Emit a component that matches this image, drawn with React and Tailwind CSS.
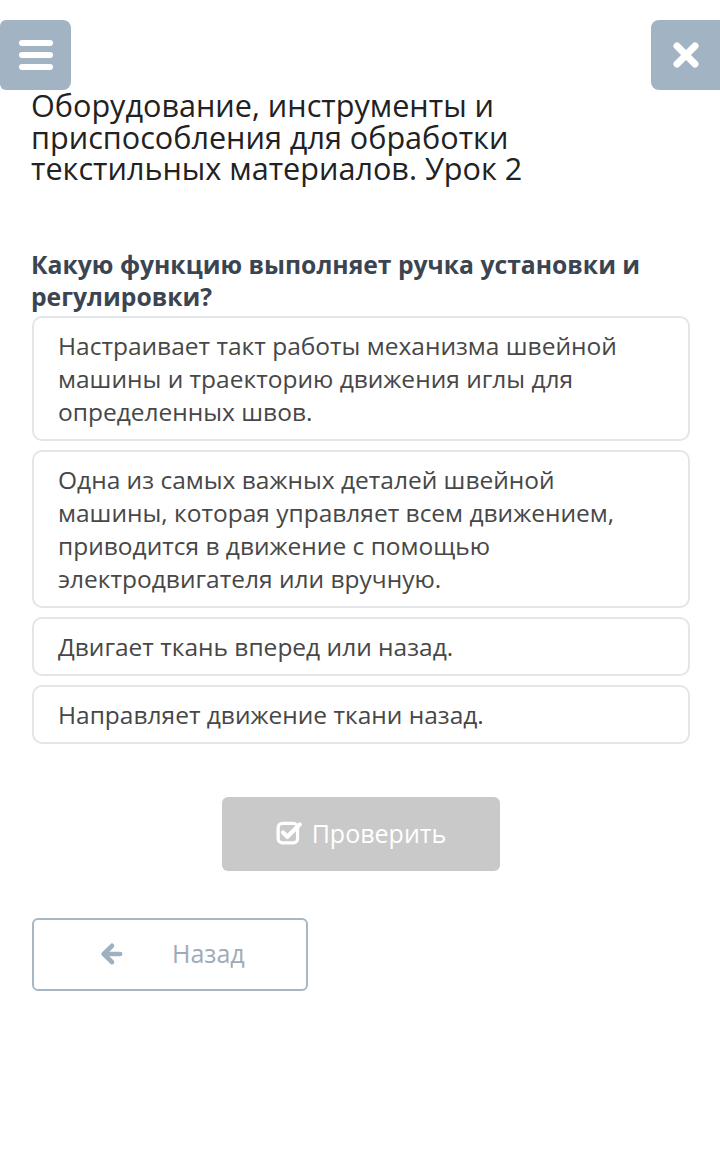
import { ArrowLeft } from 'lucide-react';

const options = [
  'Настраивает такт работы механизма швейной машины и траекторию движения иглы для определенных швов.',
  'Одна из самых важных деталей швейной машины, которая управляет всем движением, приводится в движение с помощью электродвигателя или вручную.',
  'Двигает ткань вперед или назад.',
  'Направляет движение ткани назад.',
];

export default function App() {
  return (
    <div className="min-h-[1161px] w-[720px] bg-white font-['Open_Sans',sans-serif]">
      <div className="flex items-start justify-between pt-5">
        <button className="flex h-[70px] w-[71px] items-center justify-center rounded-r-lg rounded-l-md bg-[#a2b4c3]">
          <span className="flex flex-col gap-[6px]">
            <span className="block h-[6px] w-[34px] rounded-sm bg-white" />
            <span className="block h-[6px] w-[34px] rounded-sm bg-white" />
            <span className="block h-[6px] w-[34px] rounded-sm bg-white" />
          </span>
        </button>
        <button className="flex h-[70px] w-[69px] items-center justify-center rounded-l-lg bg-[#a2b4c3]">
          <svg width="28" height="28" viewBox="0 0 28 28">
            <path d="M5 5 L23 23 M23 5 L5 23" stroke="white" strokeWidth="7" strokeLinecap="round" />
          </svg>
        </button>
      </div>

      <h1 className="pl-[31px] pr-4 text-[30.6px] leading-[31.5px] text-[#222]">
        Оборудование, инструменты и
        <br />
        приспособления для обработки
        <br />
        текстильных материалов. Урок 2
      </h1>

      <div className="pl-[32px] pr-[30px] pt-[64px]">
        <h2 className="-ml-px text-[24.7px] font-bold leading-[32px] text-[#3b4552]">
          Какую функцию выполняет ручка установки и регулировки?
        </h2>

        <div className="mt-[3px] flex flex-col gap-[9px]">
          {options.map((text) => (
            <div
              key={text}
              className="rounded-[10px] border-2 border-[#e3e6e9] bg-white py-[11px] pl-[24px] pr-[22px] text-[24.5px] leading-[33px] text-[#474747]"
            >
              {text}
            </div>
          ))}
        </div>

        <div className="flex justify-center pt-[53px]">
          <button className="flex h-[74px] w-[278px] items-center justify-center gap-[8px] rounded-md bg-[#c9c9c9] text-[25px] text-white">
            <svg width="28" height="26" viewBox="0 0 26 24" className="-mt-[3px]">
              <rect x="2" y="4" width="18" height="18" rx="4" fill="none" stroke="white" strokeWidth="3" />
              <path d="M6.5 12.5 L10.5 16.5 L22 5" fill="none" stroke="white" strokeWidth="4" strokeLinecap="round" strokeLinejoin="round" />
            </svg>
            Проверить
          </button>
        </div>

        <div className="pt-[47px]">
          <button className="flex h-[73px] w-[276px] items-center rounded-md border-2 border-[#a8b7c4] bg-white text-[25px] text-[#9eabb7]">
            <ArrowLeft className="ml-[64px] h-7 w-7 text-[#9fb0bf]" strokeWidth={4} />
            <span className="ml-[46px]">Назад</span>
          </button>
        </div>
      </div>
    </div>
  );
}
